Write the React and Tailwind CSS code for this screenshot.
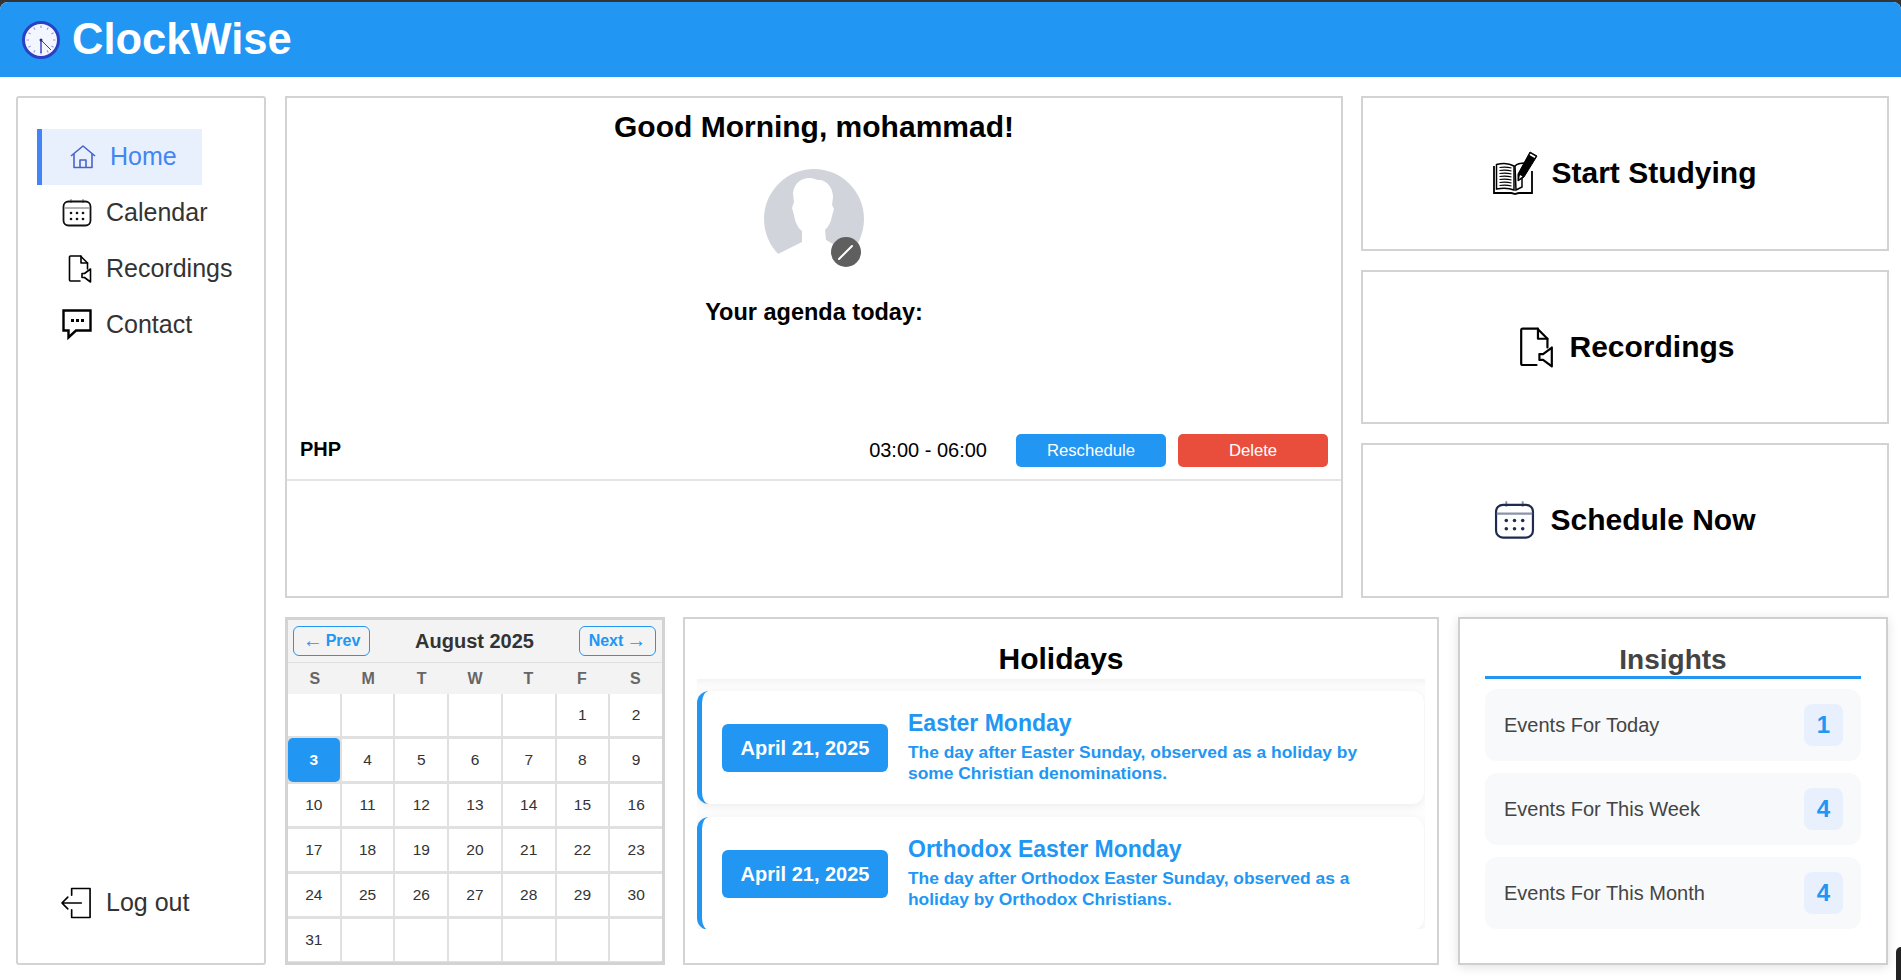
import React from 'react';

const FONT = "font-['Liberation_Sans',Arial,sans-serif]";

function ClockLogo() {
    const ticks = Array.from({ length: 12 }, (_, i) => i * 30);
    return (
        <svg width="38" height="38" viewBox="0 0 38 38">
            <circle cx="19" cy="19" r="17.5" fill="#f4f6ff" stroke="#2a41c4" strokeWidth="3" />
            {ticks.map((a) => (
                <line key={a} x1="19" y1="4.5" x2="19" y2="7" stroke="#8fa0e6" strokeWidth="1.2" transform={`rotate(${a} 19 19)`} />
            ))}
            <line x1="19" y1="19" x2="19" y2="32" stroke="#2a3fb0" strokeWidth="1.4" />
            <line x1="19" y1="19" x2="29" y2="29" stroke="#2a3fb0" strokeWidth="1" />
            <circle cx="19" cy="19" r="1.5" fill="#1f2f90" />
        </svg>
    );
}

function HomeIcon() {
    return (
        <svg width="26" height="24" viewBox="0 0 26 24" fill="none" stroke="#4a62c8" strokeWidth="1.6" strokeLinejoin="round">
            <path d="M1 11 13 1l12 10" />
            <path d="M4 9v13.5h18V9" />
            <path d="M10 22.5V15h6v7.5" />
        </svg>
    );
}

function CalendarIcon({ size = 30, color = '#111', band = '#9a9a9a', stroke = 1.8 }) {
    return (
        <svg width={size} height={size} viewBox="0 0 30 30" fill="none">
            <path d="M9 1v4M21 1v4" stroke={band} strokeWidth="1.4" />
            <rect x="1.5" y="3.5" width="27" height="24" rx="5" stroke={color} strokeWidth={stroke} />
            <path d="M2 10h26" stroke={band} strokeWidth="1.6" />
            {[9, 15, 21].map((x) => [15, 21].map((y) => (
                <circle key={`${x}-${y}`} cx={x} cy={y} r="1.3" fill={color} />
            )))}
        </svg>
    );
}

function RecordingIcon({ width = 24, height = 28, stroke = 1.6 }) {
    return (
        <svg width={width} height={height} viewBox="0 0 24 28" fill="none" stroke="#000" strokeWidth={stroke} strokeLinejoin="round" strokeLinecap="round">
            <path d="M12 26H2.500a1 1 0 0 1-1-1V2a1 1 0 0 1 1-1h10l7 7v6" />
            <path d="M13 1v7h6.500" />
            <path d="M14 18.500h2.500l6-4.500v13l-6-4.500H14z" />
        </svg>
    );
}

function ChatIcon() {
    return (
        <svg width="30" height="32" viewBox="0 0 30 32" fill="none">
            <path d="M1.500 1.500h27v20H14l-7.500 7v-7h-5z" stroke="#000" strokeWidth="2.400" />
            <rect x="9" y="10" width="3" height="3" fill="#000" />
            <rect x="14" y="10" width="3" height="3" fill="#000" />
            <rect x="19" y="10" width="3" height="3" fill="#000" />
        </svg>
    );
}

function LogoutIcon() {
    return (
        <svg width="32" height="32" viewBox="0 0 32 32" fill="none" stroke="#000" strokeWidth="1.7" strokeLinecap="round" strokeLinejoin="round">
            <path d="M11 8V1h19v30H11v-8" />
            <path d="M21 16H1M7 10l-6 6 6 6" />
        </svg>
    );
}

function BookIcon() {
    return (
        <svg width="46" height="44" viewBox="0 0 46 44" fill="none">
            <path d="M1 15v27h17c2 0 3 1 4 1s2-1 4-1h13V20" stroke="#000" strokeWidth="1.800" />
            <path d="M3.500 13.500C9 12 16 12 21 15v24c-5-2-12-2-17.500-1z" fill="#fff" stroke="#000" strokeWidth="1.500" />
            <path d="M22 15c2-2 6-3 10-3l-3 10v14l-6 3z" fill="#fff" stroke="#000" strokeWidth="1.500" />
            {[17, 20, 23, 26, 29, 32, 35].map((y) => (
                <path key={y} d={`M6.500 ${y - 0.5}c4-.5 8-.5 12 .5`} stroke="#000" strokeWidth="1.200" />
            ))}
            <path d="m37 1 7 4-13 21-6 4 0-7z" fill="#000" stroke="#000" strokeWidth="1" />
            <path d="m37.500 2.500 5 3-1 1.500-5-3z" fill="#fff" />
            <path d="m27 24 2.500 1.500-3.500 2.500z" fill="#fff" />
        </svg>
    );
}

function Avatar() {
    return (
        <div className="relative w-[100px] h-[100px]">
            <svg width="100" height="100" viewBox="0 0 100 100">
                <circle cx="50" cy="50" r="50" fill="#d1d5db" />
                <path fill="#fff" d="M14 85 38 73V62C33 58 31 52 30 46L28 39 30 33 29 24C30 14 38 9 45 9C50 9 52 11 55 11C63 11 69 19 69 28L68 36 70 40 68 47C67 53 65 57 61 61L62 71 86 85V100H14Z" />
            </svg>
            <div className="absolute left-[67px] top-[68px] w-[30px] h-[30px] rounded-full bg-[#5f5f5f] flex items-center justify-center">
                <svg width="18" height="18" viewBox="0 0 18 18">
                    <path d="M2 16 15 3" stroke="#fff" strokeWidth="2" strokeLinecap="round" />
                </svg>
            </div>
        </div>
    );
}

function NavItem({ icon, label, active }) {
    if (active) {
        return (
            <div className="w-[165px] h-[56px] flex items-center border-l-[5px] border-[#4285f4] bg-[#e8f0fe] pl-[28px] gap-[14px] text-[25px] text-[#4285f4]">
                {icon}
                <span>{label}</span>
            </div>
        );
    }
    return (
        <div className="h-[56px] flex items-center pl-[24px] gap-[14px] text-[25px] text-[#333]">
            <span className="w-[31px] flex justify-end">{icon}</span>
            <span>{label}</span>
        </div>
    );
}

function Sidebar() {
    return (
        <aside className="w-[250px] h-[869px] shrink-0 border-2 border-[#d3d3d3] rounded-[3px] bg-white pt-[31px] pl-[19px] pb-[32px] flex flex-col justify-between">
            <nav className="flex flex-col">
                <NavItem active icon={<HomeIcon />} label="Home" />
                <NavItem icon={<CalendarIcon />} label="Calendar" />
                <NavItem icon={<RecordingIcon />} label="Recordings" />
                <NavItem icon={<ChatIcon />} label="Contact" />
            </nav>
            <NavItem icon={<LogoutIcon />} label="Log out" />
        </aside>
    );
}

function ActionCard({ icon, label, gap }) {
    return (
        <div className={`h-[155px] border-2 border-[#d3d3d3] bg-white flex items-center justify-center ${gap} text-[30px] font-bold text-black`}>
            {icon}
            <span className="pb-[2px]">{label}</span>
        </div>
    );
}

const CELLS = [
    '', '', '', '', '', '1', '2',
    '3', '4', '5', '6', '7', '8', '9',
    '10', '11', '12', '13', '14', '15', '16',
    '17', '18', '19', '20', '21', '22', '23',
    '24', '25', '26', '27', '28', '29', '30',
    '31', '', '', '', '', '', '',
];

function MiniCalendar() {
    return (
        <div className="w-[380px] shrink-0 border-[3px] border-[#d3d3d3] bg-[#e0e0e0] flex flex-col">
            <div className="h-[43px] bg-[#f3f3f3] flex items-center justify-between pl-[5px] pr-[6px] border-b border-[#e0e0e0]">
                <button className="w-[77px] h-[30px] rounded-[6px] border border-[#2196f3] text-[#2196f3] text-[16px] font-bold flex items-center justify-center gap-[3px]">
                    <span className="text-[20px] font-normal leading-none mb-[3px]">←</span>
                    <span>Prev</span>
                </button>
                <span className="text-[20px] font-bold text-[#333]">August 2025</span>
                <button className="w-[77px] h-[30px] rounded-[6px] border border-[#2196f3] text-[#2196f3] text-[16px] font-bold flex items-center justify-center gap-[3px]">
                    <span>Next</span>
                    <span className="text-[20px] font-normal leading-none mb-[3px]">→</span>
                </button>
            </div>
            <div className="h-[31px] bg-[#f3f3f3] grid grid-cols-7 items-center text-center text-[16px] font-bold text-[#666]">
                {['S', 'M', 'T', 'W', 'T', 'F', 'S'].map((d, i) => <span key={i}>{d}</span>)}
            </div>
            <div className="flex-1 grid grid-cols-7 grid-rows-6 gap-x-[2px] gap-y-[3px] pb-[1px]">
                {CELLS.map((c, i) => (
                    <div key={i} className={c === '3'
                        ? 'bg-[#2196f3] text-white font-bold rounded-[5px] -my-px flex items-center justify-center text-[15.5px]'
                        : 'bg-white text-[#333] flex items-center justify-center text-[15.5px]'}>
                        {c}
                    </div>
                ))}
            </div>
        </div>
    );
}

function HolidayCard({ title, text }) {
    return (
        <div className="h-[113px] shrink-0 rounded-[12px] border-l-[5px] border-[#2196f3] bg-white shadow-[0_2px_10px_rgba(0,0,0,0.07)] flex items-center pl-[20px] pr-[36px] gap-[20px]">
            <div className="w-[166px] h-[48px] shrink-0 rounded-[6px] bg-[#2196f3] text-white text-[20px] font-bold flex items-center justify-center">April 21, 2025</div>
            <div>
                <div className="text-[23px] font-bold text-[#2196f3] leading-[26px] mb-[6px] -mt-[1px]">{title}</div>
                <div className="text-[17.4px] font-bold text-[#2196f3] leading-[21px]">{text}</div>
            </div>
        </div>
    );
}

function Holidays() {
    return (
        <div className="w-[756px] shrink-0 mr-[1px] border-2 border-[#d3d3d3] bg-white flex flex-col">
            <h2 className="h-[60px] pt-[20px] text-center text-[30px] leading-[40px] font-bold text-black">Holidays</h2>
            <div className="mx-[12px] h-[250px] overflow-hidden bg-[#fdfdfd] flex flex-col gap-[13px] pt-[12px] pr-[1px] shadow-[inset_0_8px_8px_-6px_rgba(0,0,0,0.06)]">
                <HolidayCard title="Easter Monday" text="The day after Easter Sunday, observed as a holiday by some Christian denominations." />
                <HolidayCard title="Orthodox Easter Monday" text="The day after Orthodox Easter Sunday, observed as a holiday by Orthodox Christians." />
            </div>
        </div>
    );
}

function InsightRow({ label, value }) {
    return (
        <div className="h-[72px] rounded-[12px] bg-[#f8f9fa] flex items-center justify-between pl-[19px] pr-[18px]">
            <span className="text-[20px] text-[#444]">{label}</span>
            <span className="w-[39px] h-[42px] rounded-[8px] bg-[#e8f0fe] text-[#2196f3] text-[24px] font-bold flex items-center justify-center">{value}</span>
        </div>
    );
}

function Insights() {
    return (
        <div className="w-[430px] shrink-0 border-2 border-[#cfcfcf] bg-white shadow-[0_2px_10px_rgba(0,0,0,0.12)] px-[25px] flex flex-col">
            <h2 className="h-[60px] pt-[24px] text-center text-[28px] leading-[34px] font-bold text-[#444] border-b-[3px] border-[#2196f3] mb-[10px]">Insights</h2>
            <div className="flex flex-col gap-[12px]">
                <InsightRow label="Events For Today" value="1" />
                <InsightRow label="Events For This Week" value="4" />
                <InsightRow label="Events For This Month" value="4" />
            </div>
        </div>
    );
}

export default function App() {
    return (
        <div className={`${FONT} relative h-screen w-full overflow-hidden bg-[#333]`}>
            <div className="h-[2px]" />
            <div className="h-[978px] bg-white rounded-t-[8px] overflow-hidden">
                <header className="h-[75px] bg-[#2196f3] flex items-center pl-[22px] gap-[12px]">
                    <ClockLogo />
                    <h1 className="text-[43.5px] font-bold text-white">ClockWise</h1>
                </header>
                <div className="flex pt-[19px] pl-[16px] gap-[19px]">
                    <Sidebar />
                    <div className="flex flex-col gap-[19px] w-[1605px]">
                        <div className="flex gap-[18px] h-[502px]">
                            <section className="w-[1058px] border-2 border-[#d3d3d3] bg-white flex flex-col items-center">
                                <h2 className="mt-[9px] text-[30px] leading-[40px] font-bold text-black">Good Morning, mohammad!</h2>
                                <div className="mt-[22px]"><Avatar /></div>
                                <h3 className="mt-[28px] text-[23.5px] leading-[30px] font-bold text-black">Your agenda today:</h3>
                                <div className="mt-[107px] w-full h-[47px] border-b-2 border-[#e5e5e5] flex items-start pl-[13px] pr-[13px]">
                                    <span className="text-[20px] font-bold text-black leading-[31px]">PHP</span>
                                    <span className="ml-auto mr-[29px] text-[20px] text-black leading-[33px]">03:00 - 06:00</span>
                                    <button className="w-[150px] h-[33px] rounded-[5px] bg-[#2196f3] text-white text-[16.7px] mr-[12px]">Reschedule</button>
                                    <button className="w-[150px] h-[33px] rounded-[5px] bg-[#e94e3d] text-white text-[16.7px]">Delete</button>
                                </div>
                            </section>
                            <div className="w-[528px] flex flex-col gap-[19px]">
                                <ActionCard icon={<BookIcon />} label="Start Studying" gap="gap-[12px]" />
                                <ActionCard icon={<span className="pl-[4px] flex"><RecordingIcon width={35} height={41} stroke={1.5} /></span>} label="Recordings" gap="gap-[15px]" />
                                <ActionCard icon={<CalendarIcon size={41} color="#1e2a50" band="#8a93aa" stroke={1.6} />} label="Schedule Now" gap="gap-[15px]" />
                            </div>
                        </div>
                        <div className="flex gap-[18px] h-[348px]">
                            <MiniCalendar />
                            <Holidays />
                            <Insights />
                        </div>
                    </div>
                </div>
            </div>
            <div className="absolute right-0 bottom-0 w-[5px] h-[33px] bg-[#222] rounded-tl-[6px]" />
        </div>
    );
}
